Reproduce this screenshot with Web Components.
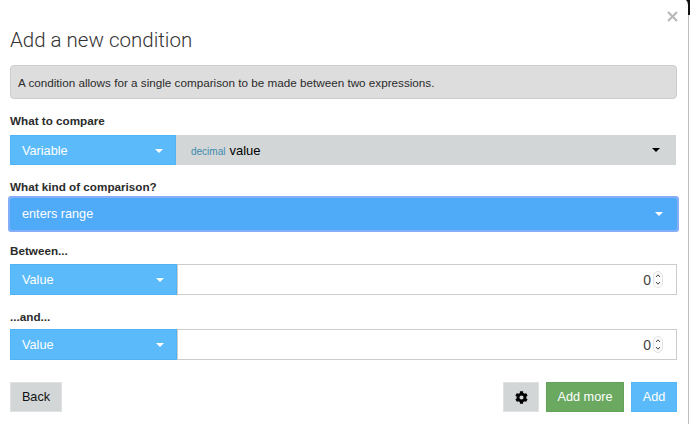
<!DOCTYPE html>
<html>
<head>
<meta charset="utf-8">
<style>
  html, body { margin: 0; padding: 0; background: #fff; height: 100%; overflow: hidden; }
  body { font-family: "Liberation Sans", Arial, sans-serif; font-size: 12px; color: #333; }
</style>
</head>
<body>
<script>
  // each element renders in connectedCallback, attributes aren't there yet in the constructor
  class CondPicker extends HTMLElement {
    connectedCallback() {
      this.attachShadow({ mode: 'open' });
      this.shadowRoot.innerHTML = `
        <style>
          :host { display: flex; box-sizing: border-box; width: 167px; flex: none; align-items: center; justify-content: space-between;
            padding: 0 11px; background: #5bbaf9; border: 1px solid #4fb3f5; color: #fff; font-size: 12.7px; }
          :host([narrow]) { width: 166px; padding-top: 1px; }
          i { width: 0; height: 0; border: 4px solid transparent; border-top-color: #fff; border-bottom: 0; margin-right: 1px; }
        </style>
        <slot></slot><i></i>`;
    }
  }
  customElements.define('cond-picker', CondPicker);

  class CondField extends HTMLElement {
    connectedCallback() {
      this.attachShadow({ mode: 'open' });
      this.shadowRoot.innerHTML = `
        <style>
          :host { display: block; }
          .label { font-weight: bold; font-size: 11.7px; line-height: 14px; color: #2b2b2b; margin-bottom: var(--gap, 5px); }
          .row { display: flex; height: var(--row, 31px); }
          :host([narrow]) .row { margin-right: 1px; }
        </style>
        <div class="label">${this.getAttribute('label')}</div>
        <div class="row"><slot></slot></div>`;
    }
  }
  customElements.define('cond-field', CondField);

  class VarSelect extends HTMLElement {
    connectedCallback() {
      this.attachShadow({ mode: 'open' });
      this.shadowRoot.innerHTML = `
        <style>
          :host { display: flex; flex: 1; align-items: center; background: #d3d6d7; padding: 0 15px; color: #000; font-size: 13px; }
          .type { color: #3d8bad; font-size: 10px; margin-right: 4px; position: relative; top: 1px; }
          .name { flex: 1; }
          i { width: 0; height: 0; border: 4px solid transparent; border-top-color: #000; border-bottom: 0; margin-right: 1px; }
        </style>
        <span class="type">${this.getAttribute('type')}</span><span class="name"><slot></slot></span><i></i>`;
    }
  }
  customElements.define('var-select', VarSelect);

  class RangeSelect extends HTMLElement {
    connectedCallback() {
      this.attachShadow({ mode: 'open' });
      this.shadowRoot.innerHTML = `
        <style>
          :host { display: flex; flex: 1; box-sizing: border-box; align-items: center; justify-content: space-between; padding: 0 12px;
            background: #4faaf7; color: #fff; font-size: 12.7px; outline: 2px solid #86adf7; border-radius: 1px; }
          i { width: 0; height: 0; border: 4px solid transparent; border-top-color: #fff; border-bottom: 0; margin-right: 2px; }
        </style>
        <slot></slot><i></i>`;
    }
  }
  customElements.define('range-select', RangeSelect);

  class NumberBox extends HTMLElement {
    connectedCallback() {
      this.attachShadow({ mode: 'open' });
      this.shadowRoot.innerHTML = `
        <style>
          :host { display: flex; flex: 1; box-sizing: border-box; align-items: center; justify-content: flex-end; background: #fff;
            border: 1px solid #ccc; padding-right: 13px; color: #444; font-size: 14px; gap: 2px; }
          svg { display: block; }
        </style>
        <slot></slot>
        <svg width="10" height="17" viewBox="0 0 10 17">
          <rect x=".5" y=".5" width="9" height="16" rx="4.5" fill="#fbfbfb" stroke="#e2e2e2"/>
          <path d="M3 6 5 3.8 7 6M3 11 5 13.2 7 11" fill="none" stroke="#444"/>
        </svg>`;
    }
  }
  customElements.define('number-box', NumberBox);

  class CondButton extends HTMLElement {
    connectedCallback() {
      this.attachShadow({ mode: 'open' });
      this.shadowRoot.innerHTML = `
        <style>
          :host { display: flex; box-sizing: border-box; height: 30px; align-items: center; justify-content: center; font-size: 12.7px;
            background: #d3d6d7; color: #111; border: 1px solid #dfe1e2; }
          :host([kind=green]) { background: #6aa95f; border-color: #62a558; color: #fff; }
          :host([kind=blue]) { background: #5bbaf9; border-color: #55b5f5; color: #fff; }
        </style>
        <slot></slot>`;
    }
  }
  customElements.define('cond-button', CondButton);

  class ConditionDialog extends HTMLElement {
    connectedCallback() {
      this.attachShadow({ mode: 'open' });
      this.shadowRoot.innerHTML = `
        <style>
          :host { display: block; position: relative; box-sizing: border-box; width: 689px; height: 424px; padding: 0 11px 0 10px;
            background: #fff; border-right: 1px solid #bdbdbd; }
          .close { position: absolute; top: 11px; right: 10px; display: block; }
          .corner { position: absolute; top: 0; right: -2px; display: block; }
          h1 { margin: 0; padding-top: 27px; font-weight: 300; font-family: Roboto, sans-serif; font-size: 20.5px; line-height: 26px; color: #333; }
          .alert { box-sizing: border-box; height: 34px; margin-top: 12px; padding: 0 7px; display: flex; align-items: center;
            background: #ddd; border: 1px solid #ccc; border-radius: 4px; font-size: 11.7px; color: #2b2b2b; }
          ::slotted(cond-field) { margin-top: 15px; }
          .foot { display: flex; justify-content: space-between; margin-top: 22px; }
          .right { display: flex; gap: 7px; }
        </style>
        <svg class="corner" width="4" height="15" viewBox="0 0 4 15"><path d="M0 0H4V15H2V5Q2 1.5 0 0Z" fill="#111"/></svg>
        <svg class="close" width="11" height="11" viewBox="0 0 11 11"><path d="M1 1 10 10M10 1 1 10" stroke="#b9b9b9" stroke-width="2.2"/></svg>
        <h1>${this.getAttribute('heading')}</h1>
        <div class="alert"><slot name="note"></slot></div>
        <slot></slot>
        <div class="foot"><slot name="back"></slot><div class="right"><slot name="actions"></slot></div></div>`;
    }
  }
  customElements.define('condition-dialog', ConditionDialog);
</script>

<condition-dialog heading="Add a new condition">
  <span slot="note">A condition allows for a single comparison to be made between two expressions.</span>
  <cond-field label="What to compare" narrow style="--gap:7px;--row:30px">
    <cond-picker narrow>Variable</cond-picker>
    <var-select type="decimal">value</var-select>
  </cond-field>
  <cond-field label="What kind of comparison?" style="--gap:4px;--row:32px">
    <range-select>enters range</range-select>
  </cond-field>
  <cond-field label="Between..." style="--gap:6px;margin-top:14px">
    <cond-picker>Value</cond-picker>
    <number-box>0</number-box>
  </cond-field>
  <cond-field label="...and...">
    <cond-picker>Value</cond-picker>
    <number-box>0</number-box>
  </cond-field>
  <cond-button slot="back" style="width:52px">Back</cond-button>
  <cond-button slot="actions" style="width:36px">
    <svg width="13" height="13" viewBox="0 0 512 512"><path fill="#000" d="M487.4 315.7l-42.6-24.6c4.3-23.2 4.3-47 0-70.2l42.6-24.6c4.9-2.8 7.1-8.6 5.5-14-11.1-35.6-30-67.8-54.7-94.6-3.8-4.1-10-5.1-14.8-2.3L380.8 110c-17.9-15.4-38.5-27.3-60.8-35.1V25.8c0-5.6-3.9-10.5-9.4-11.7-36.7-8.2-74.3-7.8-109.2 0-5.5 1.2-9.4 6.1-9.4 11.7V75c-22.2 7.9-42.8 19.8-60.8 35.1L88.7 85.5c-4.9-2.8-11-1.9-14.8 2.3-24.7 26.7-43.6 58.9-54.7 94.6-1.7 5.4.6 11.2 5.5 14L67.3 221c-4.3 23.2-4.3 47 0 70.2l-42.6 24.6c-4.9 2.8-7.1 8.6-5.5 14 11.1 35.6 30 67.8 54.7 94.6 3.8 4.1 10 5.1 14.8 2.3l42.6-24.6c17.9 15.4 38.5 27.3 60.8 35.1v49.2c0 5.6 3.9 10.5 9.4 11.7 36.7 8.2 74.3 7.8 109.2 0 5.5-1.2 9.4-6.1 9.4-11.7v-49.2c22.2-7.9 42.8-19.8 60.8-35.1l42.6 24.6c4.9 2.8 11 1.9 14.8-2.3 24.7-26.7 43.6-58.9 54.7-94.6 1.5-5.5-.7-11.3-5.6-14.1zM256 336c-44.1 0-80-35.9-80-80s35.9-80 80-80 80 35.9 80 80-35.9 80-80 80z"/></svg>
  </cond-button>
  <cond-button slot="actions" kind="green" style="width:78px">Add more</cond-button>
  <cond-button slot="actions" kind="blue" style="width:46px">Add</cond-button>
</condition-dialog>
</body>
</html>
